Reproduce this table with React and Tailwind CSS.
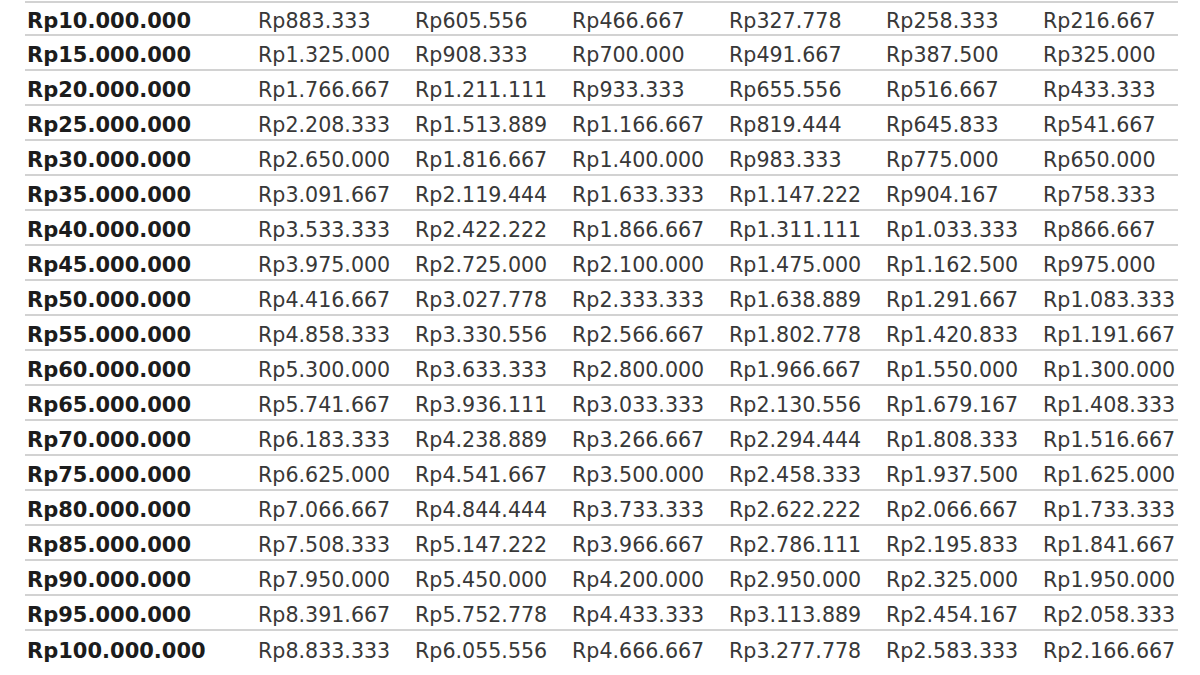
import React from 'react';

const terms = [12, 18, 24, 36, 48, 60];

const fmt = (n) => 'Rp' + String(Math.round(n)).replace(/\B(?=(\d{3})+(?!\d))/g, '.');

const rows = [];
for (let p = 10000000; p <= 100000000; p += 5000000) {
  rows.push({
    plafon: p,
    angsuran: terms.map((t) => p / t + p * 0.005),
  });
}

export default function App() {
  return (
    <div className="w-[1200px] h-[675px] overflow-hidden bg-white pt-px" style={{ fontFamily: '"DejaVu Sans", Verdana, sans-serif' }}>
      <div className="ml-[25px] w-[1153px]">
        {rows.map((row, i) => (
          <div
            key={row.plafon}
            className={`grid grid-cols-[231px_157px_157px_157px_157px_157px_137px] h-[35px] items-center pl-[2px] pt-[5px] ${i === 0 ? 'border-t-2' : ''} ${i < rows.length - 1 ? 'border-b-2' : ''} border-[#d2d2d2]`}
          >
            <span className="text-[21px] font-bold text-[#1c1c1c] leading-none">{fmt(row.plafon)}</span>
            {row.angsuran.map((a, j) => (
              <span key={j} className="text-[20.6px] text-[#383838] leading-none">
                {fmt(a)}
              </span>
            ))}
          </div>
        ))}
      </div>
    </div>
  );
}
